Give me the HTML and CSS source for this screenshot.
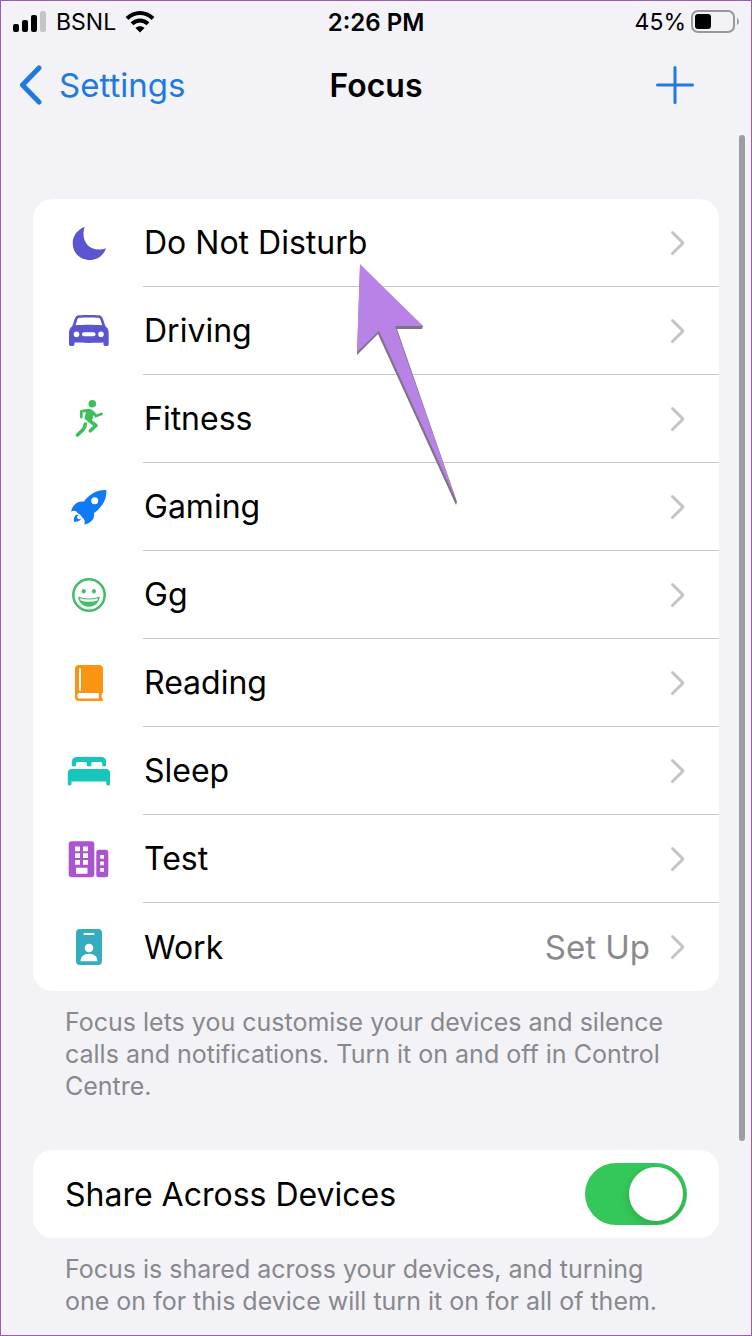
FILE: index.html
```html
<!DOCTYPE html>
<html lang="en">
<head>
    <meta charset="UTF-8">
    <meta name="viewport" content="width=device-width, initial-scale=1.0">
    <title>Focus</title>
    <link rel="stylesheet" href="styles.css">
</head>
<body>
    <div class="screen">
        <div class="status-bar">
            <div class="status-left">
                <svg class="signal" width="34" height="24" viewBox="0 0 34 24">
                    <rect x="0" y="14" width="6" height="8" rx="2"/>
                    <rect x="9" y="10" width="6" height="12" rx="2"/>
                    <rect x="18" y="5" width="6" height="17" rx="2"/>
                    <rect x="27" y="1" width="6" height="21" rx="2" fill="#c5c5c8"/>
                </svg>
                <span>BSNL</span>
                <svg class="wifi" width="30" height="24" viewBox="0 0 30 24">
                    <path d="M2 8.500C9.500 1.200 20.500 1.200 28 8.500" fill="none" stroke="#000" stroke-width="4"/>
                    <path d="M7 13.800C11.700 9.300 18.300 9.300 23 13.800" fill="none" stroke="#000" stroke-width="4"/>
                    <path d="M10.500 18C13 15.600 17 15.600 19.500 18L15 22.500Z"/>
                </svg>
            </div>
            <div class="status-time">2:26 PM</div>
            <div class="status-right">
                <span>45%</span>
                <svg class="battery" width="48" height="24" viewBox="0 0 48 24">
                    <rect x="1" y="1" width="42" height="21" rx="6" fill="none" stroke="#98989b" stroke-width="2"/>
                    <rect x="4" y="4" width="16" height="15" rx="3"/>
                    <path d="M46 8C48.500 9 48.500 14 46 15Z" fill="#98989b"/>
                </svg>
            </div>
        </div>

        <header class="navbar">
            <a href="#" class="back-link">
                <svg width="24" height="40" viewBox="0 0 24 40">
                    <path d="M20 3L3.500 20L20 37" fill="none" stroke="currentColor" stroke-width="5" stroke-linecap="round" stroke-linejoin="round"/>
                </svg>
                <span>Settings</span>
            </a>
            <h1 class="nav-title">Focus</h1>
            <button class="add-btn" type="button" aria-label="Add Focus">
                <svg width="38" height="38" viewBox="0 0 38 38">
                    <path d="M19 1.500V36.500M1.500 19H36.500" stroke="currentColor" stroke-width="3" stroke-linecap="round"/>
                </svg>
            </button>
        </header>

        <main class="content">
            <nav class="card">
                <a href="#" class="row">
                    <svg class="icon" viewBox="0 0 48 48" fill="#5b55d0">
                        <path d="M19.700 7.700C12 11 7.700 17 7.700 24C7.700 34 15 41 25 41C32.500 41 38.500 36.500 41 29.300C39 30.200 36.500 30.500 34 30.500C24.500 30.500 18.500 24 18.500 15C18.500 12 18.900 9.700 19.700 7.700Z"/>
                    </svg>
                    <span class="row-body"><span class="label">Do Not Disturb</span><svg class="chevron" viewBox="0 0 16 26"><path d="M2.500 2.500L13 13L2.500 23.500"/></svg></span>
                </a>
                <a href="#" class="row">
                    <svg class="icon" viewBox="0 0 48 48" fill="#5b55d0">
                        <path fill-rule="evenodd" d="M14 8.300C18 7.800 29 7.800 33.500 8.300C36 8.600 37 9.500 38 12L40.300 19C42.800 20.800 43.700 23 43.700 26V37.500C43.700 39.500 38.500 39.500 38.500 37.500V35.500C32 36 16 36 9.500 35.500V37.500C9.500 39.500 4 39.500 4 37.500V26C4 23 5 20.800 7.300 19L9.700 12C10.700 9.500 11.500 8.600 14 8.300ZM14.500 10.800C13.200 11 12.700 11.500 12.200 13L10.500 18.300C18 17.600 29.500 17.600 37.300 18.300L35.500 13C35 11.500 34.500 11 33.200 10.800C29 10.300 18.500 10.300 14.500 10.800Z"/>
                        <circle cx="11.500" cy="27.300" r="2.800" fill="#fff"/>
                        <circle cx="36" cy="27.300" r="2.800" fill="#fff"/>
                        <rect x="17" y="25.300" width="13.500" height="4" rx="2" fill="#fff"/>
                    </svg>
                    <span class="row-body"><span class="label">Driving</span><svg class="chevron" viewBox="0 0 16 26"><path d="M2.500 2.500L13 13L2.500 23.500"/></svg></span>
                </a>
                <a href="#" class="row">
                    <svg class="icon" viewBox="0 0 48 48" fill="none" stroke="#3dbf5c" stroke-linecap="round" stroke-linejoin="round">
                        <circle cx="27.300" cy="8.800" r="3.800" fill="#3dbf5c" stroke="none"/>
                        <path d="M16.300 22V16.300L22 15.500M28 17.500L31 21L36.500 19" stroke-width="2.800"/>
                        <path d="M21.500 15C24 14 27.500 15.500 28.300 17.500L26 25.500L20.500 23.500L22 17Z" fill="#3dbf5c" stroke-width="2"/>
                        <path d="M23.500 25L31 30.500L25.300 35.800" stroke-width="3.600"/>
                        <path d="M20.300 29C20 32 19.300 33.500 17.700 35L12.500 40" stroke-width="3.600"/>
                    </svg>
                    <span class="row-body"><span class="label">Fitness</span><svg class="chevron" viewBox="0 0 16 26"><path d="M2.500 2.500L13 13L2.500 23.500"/></svg></span>
                </a>
                <a href="#" class="row">
                    <svg class="icon" viewBox="0 0 48 48" fill="#0f7af5">
                        <path d="M40.700 7C32 6.700 24 11.500 18.700 18.800C13 17.700 8 21.500 6 28.500C8 27.700 10 27.500 11.500 28.500C12.200 30 13.500 30.500 14.500 31.200C16 32 16.500 34.500 18.500 35.500C20 37.500 20 39.500 19.300 41.700C26 40 30 36 29 30C37 24.500 42 16 41.300 7.700C41.300 7.200 41.200 7 40.700 7Z"/>
                        <circle cx="29.700" cy="17.800" r="3.500" fill="#fff"/>
                        <path d="M12.500 31.500C9.500 32 8.600 35 9 38.700C12.500 39 15.500 38 16.300 35.300C15 36.300 13.300 36.500 12.500 35.500C11.800 34.700 12 33.200 13.300 32.300Z"/>
                    </svg>
                    <span class="row-body"><span class="label">Gaming</span><svg class="chevron" viewBox="0 0 16 26"><path d="M2.500 2.500L13 13L2.500 23.500"/></svg></span>
                </a>
                <a href="#" class="row">
                    <svg class="icon" viewBox="0 0 48 48" fill="#42bd68">
                        <circle cx="24" cy="24" r="15.700" fill="none" stroke="#42bd68" stroke-width="2.500"/>
                        <ellipse cx="18.700" cy="20.300" rx="2" ry="2.300"/>
                        <ellipse cx="28.900" cy="20.300" rx="2" ry="2.300"/>
                        <path d="M13.200 25.500C20 28 28 28 34.800 25.500C34.500 31.500 30 35.700 24 35.700C18 35.700 13.500 31.500 13.200 25.500Z"/>
                        <path d="M15 27.300C21 29 27 29 33 27.300L32.300 29.500C27 31.300 21 31.300 15.700 29.500Z" fill="#fff"/>
                    </svg>
                    <span class="row-body"><span class="label">Gg</span><svg class="chevron" viewBox="0 0 16 26"><path d="M2.500 2.500L13 13L2.500 23.500"/></svg></span>
                </a>
                <a href="#" class="row">
                    <svg class="icon" viewBox="0 0 48 48" fill="#fb9413">
                        <path d="M14 6H34Q38 6 38 10V32.500Q38 34 37 35C36 36.500 36.500 38.500 37.700 40C38.500 41 37.800 42 37 42H14Q10 42 10 38V10Q10 6 14 6Z"/>
                        <path d="M14 34H34.200Q33.200 36.800 34.200 39.500H14Q12.300 39.500 12.300 36.800Q12.300 34 14 34Z" fill="#fff"/>
                        <rect x="14" y="9" width="2" height="23" rx="1" fill="#fff"/>
                    </svg>
                    <span class="row-body"><span class="label">Reading</span><svg class="chevron" viewBox="0 0 16 26"><path d="M2.500 2.500L13 13L2.500 23.500"/></svg></span>
                </a>
                <a href="#" class="row">
                    <svg class="icon" viewBox="0 0 48 48" fill="#18c5bb">
                        <path d="M12 10H36.500Q41 10 41 14.500V19.300H37.300V17Q37.300 15 35.300 15H28Q26.200 15 26.200 17V19.300H22V17Q22 15 20 15H13Q11 15 11 17V19.300H7V14.500Q7 10 12 10Z"/>
                        <path d="M7 22H41Q45 22 45 26V37Q45 38.500 43.200 38.500Q41.300 38.500 41.300 37V34.500H6.500V37Q6.500 38.500 4.700 38.500Q2.800 38.500 2.800 37V26Q2.800 22 7 22Z"/>
                    </svg>
                    <span class="row-body"><span class="label">Sleep</span><svg class="chevron" viewBox="0 0 16 26"><path d="M2.500 2.500L13 13L2.500 23.500"/></svg></span>
                </a>
                <a href="#" class="row">
                    <svg class="icon" viewBox="0 0 48 48" fill="#aa55cf">
                        <rect x="3.700" y="6.300" width="25.600" height="36" rx="3"/>
                        <rect x="31.300" y="14.700" width="12" height="27.600" rx="2.500"/>
                        <path fill="#fff" d="M10 11.500h5v4.800h-5zM18 11.500h5v4.800h-5zM10 18.200h5v4.800h-5zM18 18.200h5v4.800h-5zM10 25h5v4.800h-5zM18 25h5v4.800h-5zM11 32.700h11.500v6h-11.500zM35.200 20h3.800v3.800h-3.800zM35.200 26.500h3.800v3.800h-3.800zM35.200 33h3.800v3.800h-3.800z"/>
                    </svg>
                    <span class="row-body"><span class="label">Test</span><svg class="chevron" viewBox="0 0 16 26"><path d="M2.500 2.500L13 13L2.500 23.500"/></svg></span>
                </a>
                <a href="#" class="row">
                    <svg class="icon" viewBox="0 0 48 48" fill="#35adc0">
                        <rect x="11" y="6" width="26" height="36" rx="4"/>
                        <rect x="18.500" y="10" width="11" height="2" rx="1" fill="#fff"/>
                        <circle cx="24" cy="25" r="4.300" fill="#fff"/>
                        <path d="M15.500 38.300C15.500 33.500 19 30.700 24 30.700C29 30.700 32.500 33.500 32.500 38.300Z" fill="#fff"/>
                    </svg>
                    <span class="row-body"><span class="label">Work</span><span class="detail">Set Up</span><svg class="chevron" viewBox="0 0 16 26"><path d="M2.500 2.500L13 13L2.500 23.500"/></svg></span>
                </a>
            </nav>
            <p class="note">Focus lets you customise your devices and silence calls and notifications. Turn it on and off in Control Centre.</p>

            <div class="card share">
                <label for="share">Share Across Devices</label>
                <input type="checkbox" id="share" class="toggle" checked>
            </div>
            <p class="note">Focus is shared across your devices, and turning one on for this device will turn it on for all of them.</p>
        </main>

        <div class="scrollbar"></div>

        <!-- pointer to Do Not Disturb -->
        <svg class="arrow" width="104" height="244" viewBox="0 0 104 244">
            <path d="M5 3L2 91L23 70L101 241L102 238L42 65L67 65L68 62Z" fill="#7d7385"/>
            <path d="M5 0L2 88L24 67L102 238L40 62L68 62Z" fill="#b982e6"/>
        </svg>
    </div>
</body>
</html>
```
FILE: styles.css
```css
* {
    box-sizing: border-box;
}
body {
    margin: 0;
    font-family: Inter, "Liberation Sans", sans-serif;
    background-color: #f2f2f7;
    color: #000;
}
.screen {
    position: relative;
    min-height: 100vh;
    border: 1px solid #9c5bb0;
    overflow: hidden;
}

/* status bar */
.status-bar {
    display: grid;
    grid-template-columns: 1fr auto 1fr;
    align-items: center;
    height: 42px;
    padding: 0 12px;
    font-size: 23px;
}
.status-left, .status-right {
    display: flex;
    align-items: center;
    gap: 8px;
}
.status-left {
    gap: 9px;
}
.status-right {
    justify-content: flex-end;
    gap: 5px;
}
.status-time {
    font-size: 24px;
    font-weight: 600;
}

/* nav bar */
.navbar {
    display: grid;
    grid-template-columns: 1fr auto 1fr;
    align-items: center;
    height: 84px;
    padding: 0 18px;
    font-size: 33px;
}
.back-link {
    display: flex;
    align-items: center;
    gap: 16px;
    color: #1f7ae0;
    text-decoration: none;
}
.nav-title {
    margin: 0;
    font-size: 32px;
    font-weight: 600;
}
.add-btn {
    display: flex;
    justify-self: end;
    margin-right: 39px;
    padding: 0;
    border: none;
    background: none;
    color: #1f7ae0;
    cursor: pointer;
}

/* list */
.content {
    padding: 72px 32px 18px;
}
.card {
    background-color: #fff;
    border-radius: 20px;
    overflow: hidden;
}
.row {
    display: flex;
    align-items: center;
    height: 88px;
    padding-left: 32px;
    color: #000;
    font-size: 32px;
    text-decoration: none;
}
.icon {
    width: 48px;
    height: 48px;
    margin-right: 30px;
}
.row-body {
    flex: 1;
    display: flex;
    align-items: center;
    height: 100%;
    padding-left: 1px;
    padding-right: 33px;
    border-bottom: 1px solid #c6c6c8;
}
.row:last-child .row-body {
    border-bottom: none;
}
.label {
    flex: 1;
}
.detail {
    margin-right: 20px;
    color: #8a8a8e;
    font-size: 33px;
}
.chevron {
    width: 16px;
    height: 26px;
    fill: none;
    stroke: #c4c4c6;
    stroke-width: 3;
    stroke-linecap: round;
    stroke-linejoin: round;
}
.note {
    margin: 15px 32px 48px;
    color: #88888d;
    font-size: 25px;
    line-height: 32px;
}
.note:last-child {
    margin-bottom: 0;
}

/* share switch */
.share {
    display: flex;
    align-items: center;
    justify-content: space-between;
    height: 88px;
    padding: 0 32px;
    font-size: 32px;
}
.toggle {
    appearance: none;
    width: 102px;
    height: 62px;
    margin: 0;
    padding: 4px;
    border-radius: 31px;
    background-color: #e9e9ea;
    cursor: pointer;
}
.toggle::before {
    content: "";
    display: block;
    width: 54px;
    height: 54px;
    border-radius: 50%;
    background-color: #fff;
    box-shadow: 0 3px 8px rgba(0, 0, 0, 0.15);
}
.toggle:checked {
    background-color: #34c759;
}
.toggle:checked::before {
    margin-left: auto;
}

/* overlays */
.scrollbar {
    position: absolute;
    top: 134px;
    right: 6px;
    width: 6px;
    height: 1006px;
    border-radius: 3px;
    background-color: #9d9d9f;
}
.arrow {
    position: absolute;
    top: 263px;
    left: 354px;
    pointer-events: none;
}
```
